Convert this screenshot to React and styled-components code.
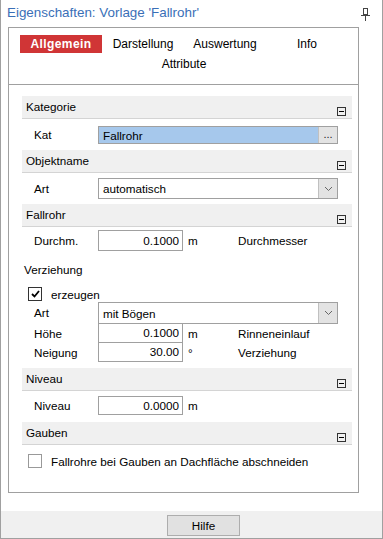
import React from 'react';
import styled, { createGlobalStyle } from 'styled-components';

const GlobalStyle = createGlobalStyle`
  html, body { margin: 0; padding: 0; background: #fff; }
  body { font-family: "Liberation Sans", Arial, sans-serif; font-size: 11.7px; color: #000; }
  * { box-sizing: border-box; }
`;

const Window = styled.div`
  width: 383px;
  height: 539px;
  display: flex;
  flex-direction: column;
  border: 1px solid #a0a0a0;
  border-top: none;
  background: #fff;
`;

const TitleBar = styled.div`
  height: 27px;
  display: flex;
  align-items: flex-start;
  justify-content: space-between;
  padding: 5px 11px 0 6px;
  color: #3a6fb7;
  font-size: 13.4px;
`;

const Body = styled.div`
  padding: 0 23px 0 7px;
`;

const Panel = styled.div`
  height: 466px;
  border: 1px solid #a0a0a0;
  display: flex;
  flex-direction: column;
`;

const TabWrap = styled.div`
  border-bottom: 1px solid #a0a0a0;
`;

const TabArea = styled.div`
  display: flex;
  flex-wrap: wrap;
  justify-content: center;
  row-gap: 2px;
  width: 328px;
  margin-left: 11px;
  padding: 7px 0 11px;
`;

const Tab = styled.div`
  width: 82px;
  height: 18px;
  display: flex;
  align-items: center;
  justify-content: center;
  font-size: 12px;
  background: ${p => (p.$active ? '#d03536' : 'transparent')};
  color: ${p => (p.$active ? '#fff' : '#000')};
  font-weight: ${p => (p.$active ? 'bold' : 'normal')};
  letter-spacing: ${p => (p.$active ? '0.4px' : '0')};
`;

const Content = styled.div`
  padding: 11px 6px 0 13px;
  display: flex;
  flex-direction: column;
`;

const SectionHeader = styled.div`
  height: 23px;
  background: #f0f0f0;
  border-bottom: 1px solid #d4d4d4;
  display: flex;
  justify-content: space-between;
  padding: 4px 6px 0 4px;
  margin-top: ${p => p.$mt || 0}px;
`;

const Collapse = styled.div`
  width: 9px;
  height: 9px;
  border: 1px solid #333;
  margin-top: 7px;
  display: flex;
  align-items: center;
  justify-content: center;
  &::after {
    content: '';
    width: 5px;
    height: 1px;
    background: #000;
  }
`;

const FieldRow = styled.div`
  display: grid;
  grid-template-columns: 64px 85px 55px auto;
  align-items: center;
  padding-left: 12px;
  margin-top: ${p => p.$mt || 0}px;
`;

const WideRow = styled.div`
  display: grid;
  grid-template-columns: 64px 240px;
  align-items: center;
  padding-left: 12px;
  margin-top: ${p => p.$mt || 0}px;
`;

const Label = styled.span`
  line-height: 16px;
`;

const NumberBox = styled.div`
  height: ${p => p.$h || 21}px;
  border: 1px solid #a0a0a0;
  border-top: ${p => (p.$joined ? 'none' : '1px solid #a0a0a0')};
  text-align: right;
  padding-right: 3px;
  line-height: ${p => (p.$h || 21) - 2}px;
`;

const Unit = styled.span`
  padding-left: 5px;
`;

const Picker = styled.div`
  height: ${p => p.$h || 21}px;
  border: 1px solid #a0a0a0;
  display: flex;
  background: ${p => (p.$selected ? '#a6c8ec' : '#fff')};
`;

const PickerText = styled.div`
  flex: 1;
  padding-left: 4px;
  display: flex;
  align-items: center;
`;

const PickerButton = styled.div`
  width: 19px;
  border-left: 1px solid #c0c0c0;
  background: #e3e3e3;
  display: flex;
  align-items: center;
  justify-content: center;
  font-size: 11px;
  color: #222;
  padding-bottom: ${p => (p.$dots ? 3 : 0)}px;
`;

const GroupTitle = styled.div`
  padding-left: 2px;
  margin-top: 9px;
  height: 20px;
  line-height: 20px;
`;

const CheckRow = styled.div`
  display: flex;
  align-items: center;
  gap: 9px;
  padding-left: 6px;
  margin-top: ${p => p.$mt || 0}px;
`;

const Box = styled.div`
  width: 14px;
  height: 14px;
  border: 1px solid ${p => (p.$checked ? '#333' : '#999')};
  display: flex;
  align-items: center;
  justify-content: center;
`;

const Spacer = styled.div`
  flex: 1;
`;

const Footer = styled.div`
  height: 27px;
  background: #f0f0f0;
  padding: 4px 0 0 166px;
`;

const Button = styled.div`
  width: 73px;
  height: 21px;
  border: 1px solid #adadad;
  background: #e1e1e1;
  display: flex;
  align-items: center;
  justify-content: center;
`;

const Pin = () => (
  <svg width="10" height="14" viewBox="0 0 10 14" style={{ marginTop: 3 }}>
    <rect x="2.5" y="0.5" width="4" height="6" fill="none" stroke="#444" />
    <line x1="0" y1="7.5" x2="9" y2="7.5" stroke="#444" />
    <line x1="4.5" y1="8" x2="4.5" y2="13" stroke="#444" />
  </svg>
);

const Chevron = () => (
  <svg width="9" height="6" viewBox="0 0 9 6">
    <polyline points="1,1 4.5,4.5 8,1" fill="none" stroke="#666" strokeWidth="1" />
  </svg>
);

const Check = () => (
  <svg width="9" height="8" viewBox="0 0 9 8">
    <polyline points="1,4 3.5,6.5 8,1" fill="none" stroke="#000" strokeWidth="1.8" />
  </svg>
);

const Section = ({ title, mt }) => (
  <SectionHeader $mt={mt}>
    <span>{title}</span>
    <Collapse />
  </SectionHeader>
);

const App = () => {
  const tabs = ['Allgemein', 'Darstellung', 'Auswertung', 'Info', 'Attribute'];
  return (
    <>
      <GlobalStyle />
      <Window>
        <TitleBar>
          <span>Eigenschaften: Vorlage 'Fallrohr'</span>
          <Pin />
        </TitleBar>
        <Body>
          <Panel>
            <TabWrap>
              <TabArea>
                {tabs.map((t, i) => (
                  <Tab key={t} $active={i === 0}>{t}</Tab>
                ))}
              </TabArea>
            </TabWrap>
            <Content>
              <Section title="Kategorie" />
              <WideRow $mt={7}>
                <Label>Kat</Label>
                <Picker $h={18} $selected>
                  <PickerText>Fallrohr</PickerText>
                  <PickerButton $dots>...</PickerButton>
                </Picker>
              </WideRow>

              <Section title="Objektname" mt={6} />
              <WideRow $mt={5}>
                <Label>Art</Label>
                <Picker $h={21}>
                  <PickerText>automatisch</PickerText>
                  <PickerButton><Chevron /></PickerButton>
                </Picker>
              </WideRow>

              <Section title="Fallrohr" mt={5} />
              <FieldRow $mt={3}>
                <Label>Durchm.</Label>
                <NumberBox>0.1000</NumberBox>
                <Unit>m</Unit>
                <span>Durchmesser</span>
              </FieldRow>

              <GroupTitle>Verziehung</GroupTitle>
              <CheckRow $mt={7}>
                <Box $checked><Check /></Box>
                <span>erzeugen</span>
              </CheckRow>
              <WideRow $mt={1}>
                <Label>Art</Label>
                <Picker $h={22}>
                  <PickerText>mit Bögen</PickerText>
                  <PickerButton><Chevron /></PickerButton>
                </Picker>
              </WideRow>
              <FieldRow>
                <Label>Höhe</Label>
                <NumberBox $h={19} $joined>0.1000</NumberBox>
                <Unit>m</Unit>
                <span>Rinneneinlauf</span>
              </FieldRow>
              <FieldRow>
                <Label>Neigung</Label>
                <NumberBox $h={19} $joined>30.00</NumberBox>
                <Unit>°</Unit>
                <span>Verziehung</span>
              </FieldRow>

              <Section title="Niveau" mt={6} />
              <FieldRow $mt={5}>
                <Label>Niveau</Label>
                <NumberBox $h={19}>0.0000</NumberBox>
                <Unit>m</Unit>
              </FieldRow>

              <Section title="Gauben" mt={7} />
              <CheckRow $mt={9}>
                <Box />
                <span>Fallrohre bei Gauben an Dachfläche abschneiden</span>
              </CheckRow>
            </Content>
          </Panel>
        </Body>
        <Spacer />
        <Footer>
          <Button>Hilfe</Button>
        </Footer>
      </Window>
    </>
  );
};

export default App;
